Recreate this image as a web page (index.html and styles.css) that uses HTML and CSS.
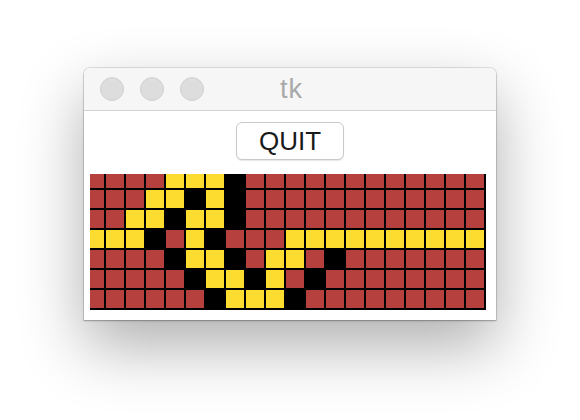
FILE: index.html
```html
<!DOCTYPE html>
<html>
<head>
<meta charset="utf-8">
<link rel="stylesheet" href="styles.css">
</head>
<body>
<div class="window">
  <div class="titlebar">
    <div class="lights">
      <span class="light"></span><span class="light"></span><span class="light"></span>
    </div>
    <div class="title">tk</div>
  </div>
  <div class="content">
    <button class="quit">QUIT</button>
    <div class="canvas">
      <div class="grid">
        <i class="r"></i><i class="r"></i><i class="r"></i><i class="r"></i><i class="y"></i><i class="y"></i><i class="y"></i><i class="k"></i><i class="r"></i><i class="r"></i><i class="r"></i><i class="r"></i><i class="r"></i><i class="r"></i><i class="r"></i><i class="r"></i><i class="r"></i><i class="r"></i><i class="r"></i><i class="r"></i>
        <i class="r"></i><i class="r"></i><i class="r"></i><i class="y"></i><i class="y"></i><i class="k"></i><i class="y"></i><i class="k"></i><i class="r"></i><i class="r"></i><i class="r"></i><i class="r"></i><i class="r"></i><i class="r"></i><i class="r"></i><i class="r"></i><i class="r"></i><i class="r"></i><i class="r"></i><i class="r"></i>
        <i class="r"></i><i class="r"></i><i class="y"></i><i class="y"></i><i class="k"></i><i class="y"></i><i class="y"></i><i class="k"></i><i class="r"></i><i class="r"></i><i class="r"></i><i class="r"></i><i class="r"></i><i class="r"></i><i class="r"></i><i class="r"></i><i class="r"></i><i class="r"></i><i class="r"></i><i class="r"></i>
        <i class="y"></i><i class="y"></i><i class="y"></i><i class="k"></i><i class="r"></i><i class="y"></i><i class="k"></i><i class="r"></i><i class="r"></i><i class="r"></i><i class="y"></i><i class="y"></i><i class="y"></i><i class="y"></i><i class="y"></i><i class="y"></i><i class="y"></i><i class="y"></i><i class="y"></i><i class="y"></i>
        <i class="r"></i><i class="r"></i><i class="r"></i><i class="r"></i><i class="k"></i><i class="y"></i><i class="y"></i><i class="k"></i><i class="r"></i><i class="y"></i><i class="y"></i><i class="r"></i><i class="k"></i><i class="r"></i><i class="r"></i><i class="r"></i><i class="r"></i><i class="r"></i><i class="r"></i><i class="r"></i>
        <i class="r"></i><i class="r"></i><i class="r"></i><i class="r"></i><i class="r"></i><i class="k"></i><i class="y"></i><i class="y"></i><i class="k"></i><i class="y"></i><i class="r"></i><i class="k"></i><i class="r"></i><i class="r"></i><i class="r"></i><i class="r"></i><i class="r"></i><i class="r"></i><i class="r"></i><i class="r"></i>
        <i class="r"></i><i class="r"></i><i class="r"></i><i class="r"></i><i class="r"></i><i class="r"></i><i class="k"></i><i class="y"></i><i class="y"></i><i class="y"></i><i class="k"></i><i class="r"></i><i class="r"></i><i class="r"></i><i class="r"></i><i class="r"></i><i class="r"></i><i class="r"></i><i class="r"></i><i class="r"></i>
      </div>
    </div>
  </div>
</div>
</body>
</html>
```

FILE: styles.css
```css
html, body {
  margin: 0;
  padding: 0;
  background: #ffffff;
}
body {
  box-sizing: border-box;
  height: 420px;
  padding: 68px 0 0 84px;
  font-family: "Liberation Sans", Arial, sans-serif;
  overflow: hidden;
}
.window {
  width: 412px;
  height: 252px;
  background: #ffffff;
  border-radius: 6px 6px 0 0;
  box-shadow: 0 0 0 1px rgba(0,0,0,0.10), 0 1px 2px rgba(0,0,0,0.25), 0 26px 64px rgba(0,0,0,0.32);
  display: flex;
  flex-direction: column;
  overflow: hidden;
}
.titlebar {
  height: 42px;
  background: #f6f6f6;
  border-bottom: 1px solid #d2d2d2;
  display: flex;
  align-items: center;
  position: relative;
  flex: none;
}
.lights {
  display: flex;
  gap: 16px;
  padding-left: 16px;
}
.light {
  width: 22px;
  height: 22px;
  border-radius: 50%;
  background: #dddddd;
  border: 1px solid #d1d1d1;
}
.title {
  position: absolute;
  left: 0;
  right: 0;
  top: 0;
  bottom: 0;
  display: flex;
  align-items: center;
  justify-content: center;
  color: #a9a9a9;
  font-size: 27px;
  letter-spacing: 1px;
  padding-left: 3px;
}
.content {
  display: flex;
  flex-direction: column;
  align-items: center;
  padding-top: 11px;
}
.quit {
  width: 108px;
  height: 38px;
  background: #ffffff;
  border: 1px solid #c9c9c9;
  border-radius: 6px;
  box-shadow: 0 1px 1px rgba(0,0,0,0.10);
  font-family: "Liberation Sans", Arial, sans-serif;
  font-size: 26px;
  color: #1a1a1a;
  padding: 0;
  margin: 0;
  line-height: 36px;
}
.canvas {
  align-self: flex-start;
  margin-top: 14px;
  margin-left: 6px;
  background: #000000;
  padding: 0 2px 2px 0;
}
.grid {
  display: grid;
  grid-template-columns: 14px repeat(19, 18px);
  grid-template-rows: 14px repeat(6, 18px);
  gap: 2px;
}
.grid i {
  display: block;
}
.r { background: #b5403d; }
.y { background: #fedb2f; }
.k { background: #000000; }
```
